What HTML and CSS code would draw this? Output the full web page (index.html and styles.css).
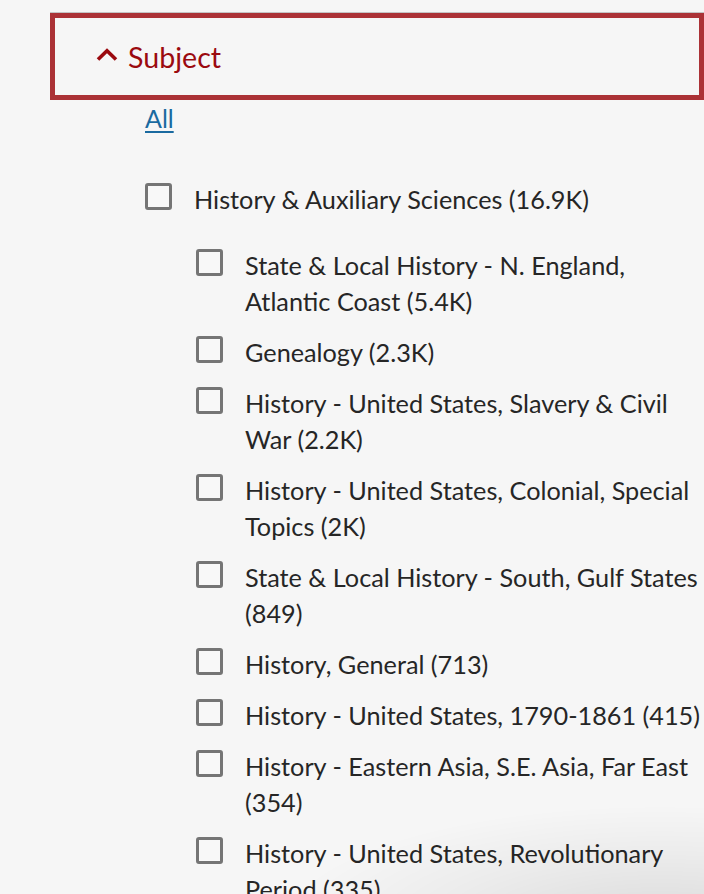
FILE: index.html
```html
<!DOCTYPE html>
<html lang="en">
<head>
<meta charset="utf-8">
<link rel="stylesheet" href="styles.css">
</head>
<body>
<div class="facet">
  <div class="facet-head">
    <button class="facet-toggle" type="button">
      <svg class="chev" width="24" height="15" viewBox="0 0 24 15"><path d="M3 12.5 L12 3.8 L21 12.5" fill="none" stroke="#9b0a0f" stroke-width="3.6"/></svg>
      <span>Subject</span>
    </button>
  </div>
  <div class="facet-body">
    <a class="all" href="#">All</a>
    <ul class="list top">
      <li><span class="box"></span><span class="label">History &amp; Auxiliary Sciences (16.9K)</span></li>
    </ul>
    <ul class="list sub">
      <li><span class="box"></span><span class="label">State &amp; Local History - N. England, Atlantic Coast (5.4K)</span></li>
      <li><span class="box"></span><span class="label">Genealogy (2.3K)</span></li>
      <li><span class="box"></span><span class="label">History - United States, Slavery &amp; Civil War (2.2K)</span></li>
      <li><span class="box"></span><span class="label">History - United States, Colonial, Special Topics (2K)</span></li>
      <li><span class="box"></span><span class="label">State &amp; Local History - South, Gulf States (849)</span></li>
      <li><span class="box"></span><span class="label">History, General (713)</span></li>
      <li><span class="box"></span><span class="label">History - United States, 1790-1861 (415)</span></li>
      <li><span class="box"></span><span class="label">History - Eastern Asia, S.E. Asia, Far East (354)</span></li>
      <li><span class="box"></span><span class="label">History - United States, Revolutionary Period (335)</span></li>
    </ul>
  </div>
</div>
<div class="shade"></div>
</body>
</html>
```
FILE: styles.css
```css
html, body {
  margin: 0;
  padding: 0;
  background: #f6f6f6;
  overflow: hidden;
  height: 894px;
}
body {
  font-family: Lato, "Open Sans", sans-serif;
  color: #262626;
}
.facet {
  padding: 12px 0 0 50px;
}
.facet-head {
  border-top: 1px solid #c4c4c4;
}
.facet-toggle {
  display: flex;
  align-items: center;
  gap: 9px;
  box-sizing: border-box;
  width: 654px;
  height: 87px;
  margin: 0;
  padding: 0 0 0 40px;
  border: 5px solid #ab3236;
  background: #f6f6f6;
  color: #9b0a0f;
  font-family: Lato, sans-serif;
  font-size: 28.6px;
  cursor: pointer;
}
.chev {
  display: block;
  margin-top: -5px;
}
.facet-body {
  padding-left: 95px;
}
.all {
  display: inline-block;
  margin-top: 4px;
  font-size: 25px;
  line-height: 28px;
  color: #1a6aa0;
  text-decoration: underline;
  text-underline-offset: 3px;
}
.list {
  list-style: none;
  margin: 0;
  padding: 0;
  font-size: 25.25px;
  line-height: 36px;
}
.list li {
  display: flex;
  align-items: flex-start;
  gap: 22px;
  margin-bottom: 15px;
}
.top {
  margin-top: 49px;
}
.sub {
  margin-top: 30px;
  padding-left: 51px;
  padding-right: 0;
}
.box {
  flex: none;
  box-sizing: border-box;
  width: 27px;
  height: 27px;
  margin-top: 2px;
  border: 3px solid #757575;
  border-radius: 3px;
  background: #f8f8f8;
}
.label {
  flex: 1;
}
.shade {
  position: fixed;
  left: 0;
  top: 0;
  width: 704px;
  height: 894px;
  pointer-events: none;
  background: radial-gradient(ellipse 380px 120px at 660px 925px, rgba(0,0,0,0.11), rgba(0,0,0,0.04) 60%, rgba(0,0,0,0) 100%);
}
```
